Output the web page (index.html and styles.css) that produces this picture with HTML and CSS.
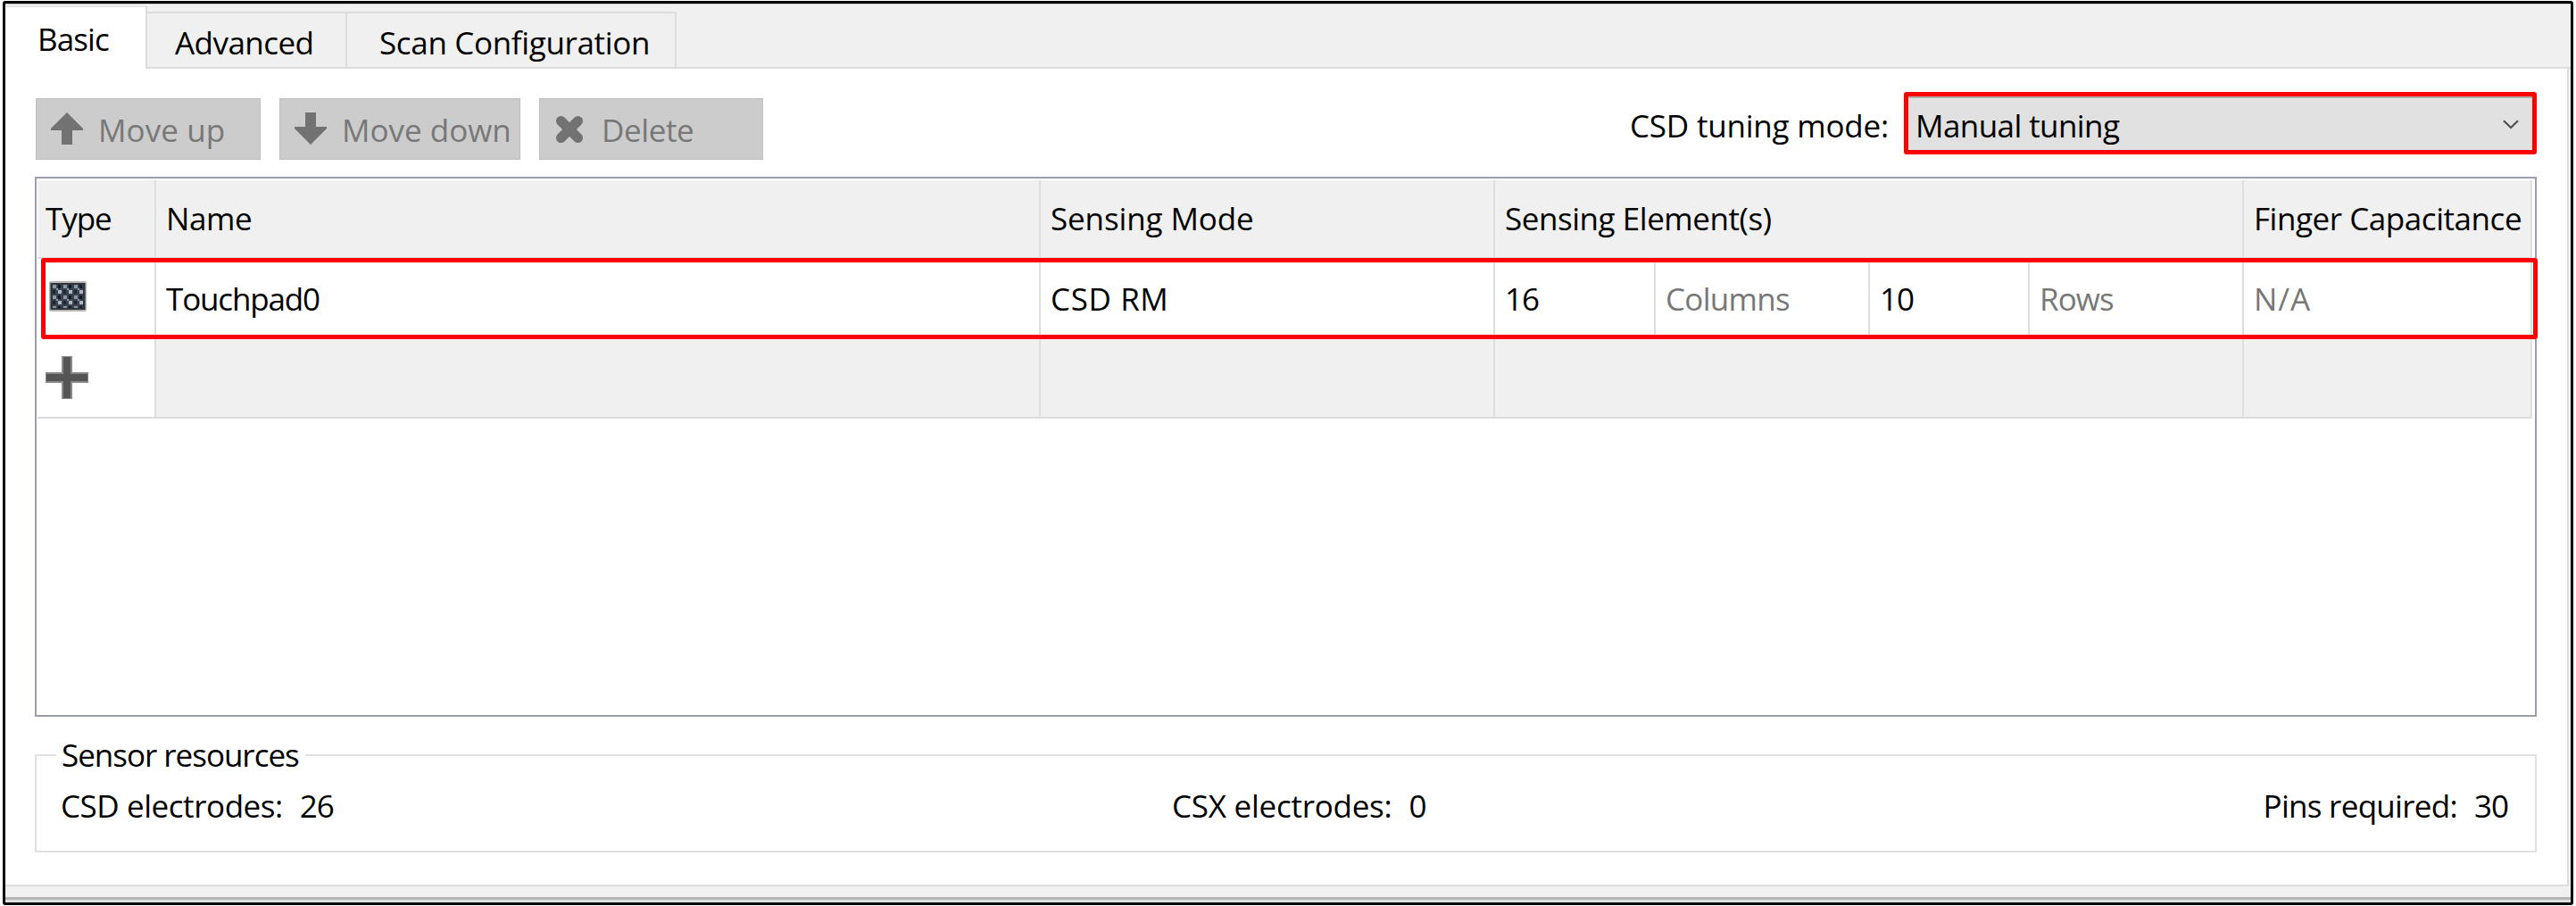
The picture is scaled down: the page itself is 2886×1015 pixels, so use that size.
FILE: index.html
```html
<!DOCTYPE html>
<html lang="en">
<head>
<meta charset="utf-8">
<title>CapSense Configurator</title>
<link rel="stylesheet" href="styles.css">
</head>
<body>
<main class="window">
  <nav class="tabs">
    <div class="tab active"><span class="t-basic">Basic</span></div>
    <div class="tab tab-advanced"><span class="t-advanced">Advanced</span></div>
    <div class="tab tab-scan"><span class="t-scan">Scan Configuration</span></div>
  </nav>
  <section class="panel">
    <div class="toolbar">
      <button class="btn btn-up">
        <svg class="icon" width="36" height="36" viewBox="0 0 36 36"><path fill="#727272" d="M18 0 36 18V20H24V36H12V20H0V18Z"/></svg>
        <span class="t-up">Move up</span>
      </button>
      <button class="btn btn-down">
        <svg class="icon" width="36" height="36" viewBox="0 0 36 36"><path fill="#727272" d="M18 36 0 18V16H12V0H24V16H36V18Z"/></svg>
        <span>Move down</span>
      </button>
      <button class="btn btn-delete">
        <svg class="icon icon-delete" width="32" height="32" viewBox="0 0 32 32"><path stroke="#727272" stroke-width="11" stroke-linecap="round" d="M6.500 6.500 25.500 25.500M25.500 6.500 6.500 25.500"/></svg>
        <span class="t-delete">Delete</span>
      </button>
      <label class="mode-label">CSD tuning mode:</label>
      <div class="combo">
        <span class="t-manual">Manual tuning</span>
        <svg width="18" height="11" viewBox="0 0 18 11"><path fill="none" stroke="#505050" stroke-width="2.200" d="M1 1.200 9 9 17 1.200"/></svg>
      </div>
    </div>

    <div class="table">
      <div class="row head">
        <div class="cell"><span class="t-type">Type</span></div>
        <div class="cell"><span class="t-name">Name</span></div>
        <div class="cell"><span class="t-mode">Sensing Mode</span></div>
        <div class="cell span4"><span class="t-elem">Sensing Element(s)</span></div>
        <div class="cell"><span class="t-finger">Finger Capacitance</span></div>
      </div>
      <div class="row">
        <div class="cell icon-cell">
          <svg class="pad" width="42" height="34" viewBox="0 0 42 34">
            <defs>
              <pattern id="weave" x="3" y="3" width="12" height="12" patternUnits="userSpaceOnUse">
                <rect width="12" height="12" fill="#39424d"/>
                <rect x="1" y="1" width="4" height="4" fill="#8796a8"/>
                <rect x="7" y="7" width="4" height="4" fill="#a9b7c8"/>
                <rect x="7" y="1" width="3" height="4" fill="#171b21"/>
                <rect x="1" y="7" width="3" height="4" fill="#20262d"/>
                <rect x="5" y="5" width="2" height="2" fill="#8d9bac"/>
              </pattern>
            </defs>
            <rect width="42" height="34" rx="2" fill="#b5b5b5"/>
            <rect x="1.500" y="2" width="39" height="30" fill="#30353c"/>
            <rect x="4" y="4" width="34" height="26" fill="url(#weave)"/>
          </svg>
        </div>
        <div class="cell"><span class="t-pad">Touchpad0</span></div>
        <div class="cell"><span class="t-csd">CSD RM</span></div>
        <div class="cell"><span class="num">16</span></div>
        <div class="cell muted"><span class="t-cols">Columns</span></div>
        <div class="cell"><span class="num">10</span></div>
        <div class="cell muted"><span class="t-rows">Rows</span></div>
        <div class="cell muted"><span class="t-na">N/A</span></div>
        <div class="highlight"></div>
      </div>
      <div class="row add">
        <div class="cell icon-cell">
          <svg class="plus" width="48" height="48" viewBox="0 0 48 48"><path fill="#8a8a8a" d="M18 0H30V18H48V30H30V48H18V30H0V18H18Z"/><path fill="#555" d="M20 1H28V20H47V28H28V47H20V28H1V20H20Z"/></svg>
        </div>
        <div class="cell"></div>
        <div class="cell"></div>
        <div class="cell span4"></div>
        <div class="cell"></div>
      </div>
    </div>

    <fieldset class="resources">
      <legend><span class="t-legend">Sensor resources</span></legend>
      <div class="stats">
        <div class="stat"><span class="t-csde">CSD electrodes:</span><span class="num">26</span></div>
        <div class="stat"><span class="t-csxe">CSX electrodes:</span><span class="num">0</span></div>
        <div class="stat"><span class="t-pins">Pins required:</span><span class="num">30</span></div>
      </div>
    </fieldset>
  </section>
  <footer class="status"></footer>
</main>
</body>
</html>
```
FILE: styles.css
```css
* { box-sizing: border-box; }

body {
  margin: 0;
  width: 2886px;
  height: 1015px;
  padding: 1px 3px;
  background: #fff;
  color: #000;
  font: 35px/48px "Open Sans", "Noto Sans", sans-serif;
  overflow: hidden;
  white-space: nowrap;
}

.window {
  display: flex;
  flex-direction: column;
  width: 2880px;
  height: 1013px;
  border: 3px solid #000;
  border-radius: 3px;
  background: #f0f0f0;
}

/* Tabs */
.tabs {
  display: flex;
  align-items: flex-end;
  height: 73px;
  border-top: 1px solid #c4c4c4;
  border-bottom: 2px solid #dcdcdc;
}
.tab {
  height: 62px;
  padding-top: 9px;
  border-top: 2px solid #dcdcdc;
  border-right: 2px solid #dcdcdc;
}
.tab.active {
  width: 159px;
  height: 70px;
  margin-bottom: -2px;
  padding: 12px 0 0 36px;
  border-top-width: 1px;
  background: #fff;
}
.tab-advanced { width: 224px; padding-left: 31px; }
.tab-scan { width: 369px; padding-left: 36px; }

/* Page */
.panel {
  height: 916px;
  margin-right: 2px;
  padding: 26px 34px 0 33px;
  border-right: 2px solid #dcdcdc;
  border-bottom: 2px solid #dcdcdc;
  background: #fff;
}
.toolbar {
  display: flex;
  align-items: flex-start;
  height: 95px;
  padding-left: 1px;
}
.btn {
  display: flex;
  align-items: flex-start;
  height: 69px;
  margin: 7px 21px 0 0;
  padding: 10px 0 0 16px;
  border: 1px solid #bfbfbf;
  background: #ccc;
  color: #787878;
  font: inherit;
}
.btn span { margin: 1px 0 0 17px; }
.btn-up { width: 252px; }
.btn-down { width: 270px; }
.btn-delete { width: 251px; padding-left: 17px; }
.icon { margin-top: 5px; }
.icon-delete { margin-top: 8px; }
.btn .t-delete { margin-left: 20px; }
.mode-label { margin: 14px 0 0 auto; letter-spacing: -0.2px; }
.combo {
  display: flex;
  justify-content: space-between;
  width: 709px;
  height: 70px;
  margin-left: 17px;
  padding: 0 15px 0 8px;
  border: 5px solid #f00;
  border-radius: 3px;
  background: #e1e1e1;
  box-shadow: inset 0 2px #adadad;
}
.combo span { margin-top: 9px; }
.combo svg { margin-top: 26px; }

/* Sensor table */
.table {
  height: 605px;
  padding: 2px 3px 0 1px;
  border: 2px solid #9a9ea8;
}
.row {
  position: relative;
  display: grid;
  grid-template-columns: 133px 991px 509px 180px 240px 179px 240px 323px;
  height: 90px;
}
.head { height: 88px; background: #f0f0f0; }
.add { height: 89px; }
.cell {
  display: flex;
  align-items: center;
  padding-left: 9px;
  border-right: 2px solid #dedede;
}
.head .cell, .add .cell { border-bottom: 2px solid #dcdcdc; }
.cell + .cell { padding-left: 11px; }
.add .cell + .cell { background: #f0f0f0; }
.span4 { grid-column: span 4; }
.muted { color: #787878; }
.icon-cell { align-items: flex-start; }
.pad { margin: 25px 0 0 4px; }
.plus { margin-top: 19px; }
.highlight {
  position: absolute;
  left: 4px;
  top: -1px;
  width: 2797px;
  height: 91px;
  border: 5px solid #f00;
  border-radius: 3px;
}

/* Resource summary */
.resources {
  height: 133px;
  margin: 19px 0 0;
  padding: 0 30px 0 22px;
  border: 2px solid #e0e0e0;
}
.resources legend { width: 279px; padding: 0 0 0 6px; }
.stats {
  display: grid;
  grid-template-columns: 1245px 1fr auto;
  padding-left: 5px;
  line-height: 65px;
}
.stat .num { margin-left: 19px; }

.status {
  height: 18px;
  margin-top: auto;
  border-top: 12px solid #f0f0f0;
  background: linear-gradient(#b4b4b4 3px, #dcdfe0 3px);
}

/* Tracking for each label */
.t-basic { letter-spacing: -0.89px; }
.t-advanced { letter-spacing: -0.55px; }
.t-scan { letter-spacing: -0.34px; }
.t-up { letter-spacing: 0.1px; }
.t-delete { letter-spacing: -0.4px; }
.t-manual { letter-spacing: -0.58px; }
.t-type { letter-spacing: -1.08px; }
.t-name { letter-spacing: -0.4px; }
.t-mode { letter-spacing: -0.12px; }
.t-elem { letter-spacing: -0.45px; }
.t-finger { letter-spacing: -0.45px; }
.t-pad { letter-spacing: -1.15px; }
.t-csd { letter-spacing: 0.6px; }
.t-cols { letter-spacing: -0.7px; }
.t-rows { letter-spacing: -0.93px; }
.t-na { letter-spacing: 0.91px; }
.t-legend { letter-spacing: -1.02px; }
.t-csde { letter-spacing: -0.44px; }
.t-csxe { letter-spacing: -0.25px; }
.t-pins { letter-spacing: -0.71px; }
.num { letter-spacing: -1px; }
```
